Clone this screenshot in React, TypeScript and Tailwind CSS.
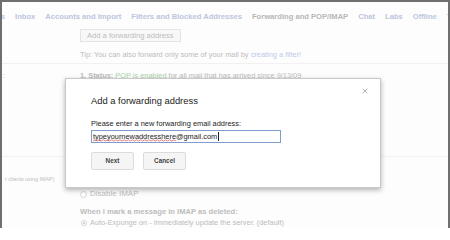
import { X } from 'lucide-react';

const tabs = [
  { label: 'Labels', active: false },
  { label: 'Inbox', active: false },
  { label: 'Accounts and Import', active: false },
  { label: 'Filters and Blocked Addresses', active: false },
  { label: 'Forwarding and POP/IMAP', active: true },
  { label: 'Chat', active: false },
  { label: 'Labs', active: false },
  { label: 'Offline', active: false },
  { label: 'Themes', active: false },
];

function Squiggle() {
  // spell-check wave under the misspelled part of the address
  return (
    <svg className="absolute left-0 top-[7px] h-[3px] w-full" viewBox="0 0 80 3" preserveAspectRatio="none">
      <path
        d="M0 2 L2 0.8 L4 2 L6 0.8 L8 2 L10 0.8 L12 2 L14 0.8 L16 2 L18 0.8 L20 2 L22 0.8 L24 2 L26 0.8 L28 2 L30 0.8 L32 2 L34 0.8 L36 2 L38 0.8 L40 2 L42 0.8 L44 2 L46 0.8 L48 2 L50 0.8 L52 2 L54 0.8 L56 2 L58 0.8 L60 2 L62 0.8 L64 2 L66 0.8 L68 2 L70 0.8 L72 2 L74 0.8 L76 2 L78 0.8 L80 2"
        fill="none"
        stroke="#d9534f"
        strokeWidth="0.7"
      />
    </svg>
  );
}

export default function App() {
  return (
    <div className="relative h-[228px] w-[450px] overflow-hidden bg-[#fdfdfd] border-t-2 border-l-2 border-r-2 border-[#6f6f6f] font-['Liberation_Sans',Arial,sans-serif]">
      {/* Settings tabs (faded behind the modal) */}
      <div className="flex h-[20px] items-end gap-[10px] whitespace-nowrap ml-[-21px] text-[7.6px] font-bold">
        {tabs.map((t) => (
          <span key={t.label} className={t.active ? 'text-[#b7b7b7]' : 'text-[#bcc5dd]'}>
            {t.label}
          </span>
        ))}
      </div>

      {/* Settings body */}
      <div className="text-[7.4px] text-[#bcbcbc]">
        <div className="pl-[78px] pt-[7px]">
          <div className="inline-flex h-[13px] items-center border border-[#e4e4e4] bg-[#f8f8f8] px-[6px] text-[7.6px] text-[#bdbdbd]">
            Add a forwarding address
          </div>
          <div className="mt-[8px] leading-[9px]">
            Tip: You can also forward only some of your mail by{' '}
            <span className="text-[#bccaeb]">creating a filter!</span>
          </div>
        </div>
        <div className="mt-[4px] border-t border-[#f1f1f1]" />
        <div className="flex pt-[7px] leading-[9px]">
          <div className="w-[78px] pl-[1px]">:</div>
          <div>
            <span className="font-bold">1. Status: </span>
            <span className="text-[#acd3ac]">POP is enabled</span> for all mail that has arrived since 9/13/09
          </div>
        </div>
        <div className="mt-[76px] border-t border-[#f1f1f1]" />
        <div className="flex pt-[17px]">
          <div className="w-[78px] pl-[3px] pt-[2px] text-[5.4px] leading-[7px]">r clients using IMAP)</div>
          <div className="pt-[15px]">
            <div className="flex items-center gap-[3px] text-[8px] leading-[10px]">
              <span className="inline-block h-[7px] w-[7px] rounded-full border border-[#d6d6d6] bg-white" />
              Disable IMAP
            </div>
            <div className="mt-[8px] text-[7.6px] font-bold leading-[9px]">When I mark a message in IMAP as deleted:</div>
            <div className="mt-[2px] flex items-center gap-[3px] pl-[1px] leading-[9px]">
              <span className="flex h-[6px] w-[6px] items-center justify-center rounded-full border border-[#d6d6d6] bg-white">
                <span className="h-[2px] w-[2px] rounded-full bg-[#c4c4c4]" />
              </span>
              Auto-Expunge on - Immediately update the server. (default)
            </div>
          </div>
        </div>
      </div>

      {/* Modal dialog */}
      <div className="absolute left-[63px] top-[76px] h-[110px] w-[316px] border border-[#c9c9c9] bg-white shadow-[0_2px_5px_rgba(0,0,0,0.3)]">
        <button className="absolute right-[11px] top-[8px] text-[#8a8a8a]">
          <X className="h-[8px] w-[8px]" strokeWidth={2} />
        </button>
        <div className="pl-[25px] pt-[16px]">
          <div className="text-[9.4px] leading-[12px] text-[#222]">Add a forwarding address</div>
          <div className="mt-[12px] text-[7.4px] leading-[9px] text-[#222]">Please enter a new forwarding email address:</div>
          <div className="mt-[2px] flex h-[13px] w-[190px] items-center border border-[#7f9ccf] px-[1px] text-[7.4px] leading-[9px] text-[#222]">
            <span className="relative">
              typeyournewaddresshere
              <Squiggle />
            </span>
            <span>@gmail.com</span>
            <span className="ml-[1px] h-[9px] w-px bg-[#222]" />
          </div>
          <div className="mt-[9px] flex gap-[9px]">
            <button className="h-[18px] w-[43px] rounded-[2px] border border-[#dcdcdc] bg-[#f5f5f5] text-[6.4px] font-bold text-[#444]">
              Next
            </button>
            <button className="h-[18px] w-[43px] rounded-[2px] border border-[#dcdcdc] bg-[#f5f5f5] text-[6.4px] font-bold text-[#444]">
              Cancel
            </button>
          </div>
        </div>
      </div>
    </div>
  );
}
